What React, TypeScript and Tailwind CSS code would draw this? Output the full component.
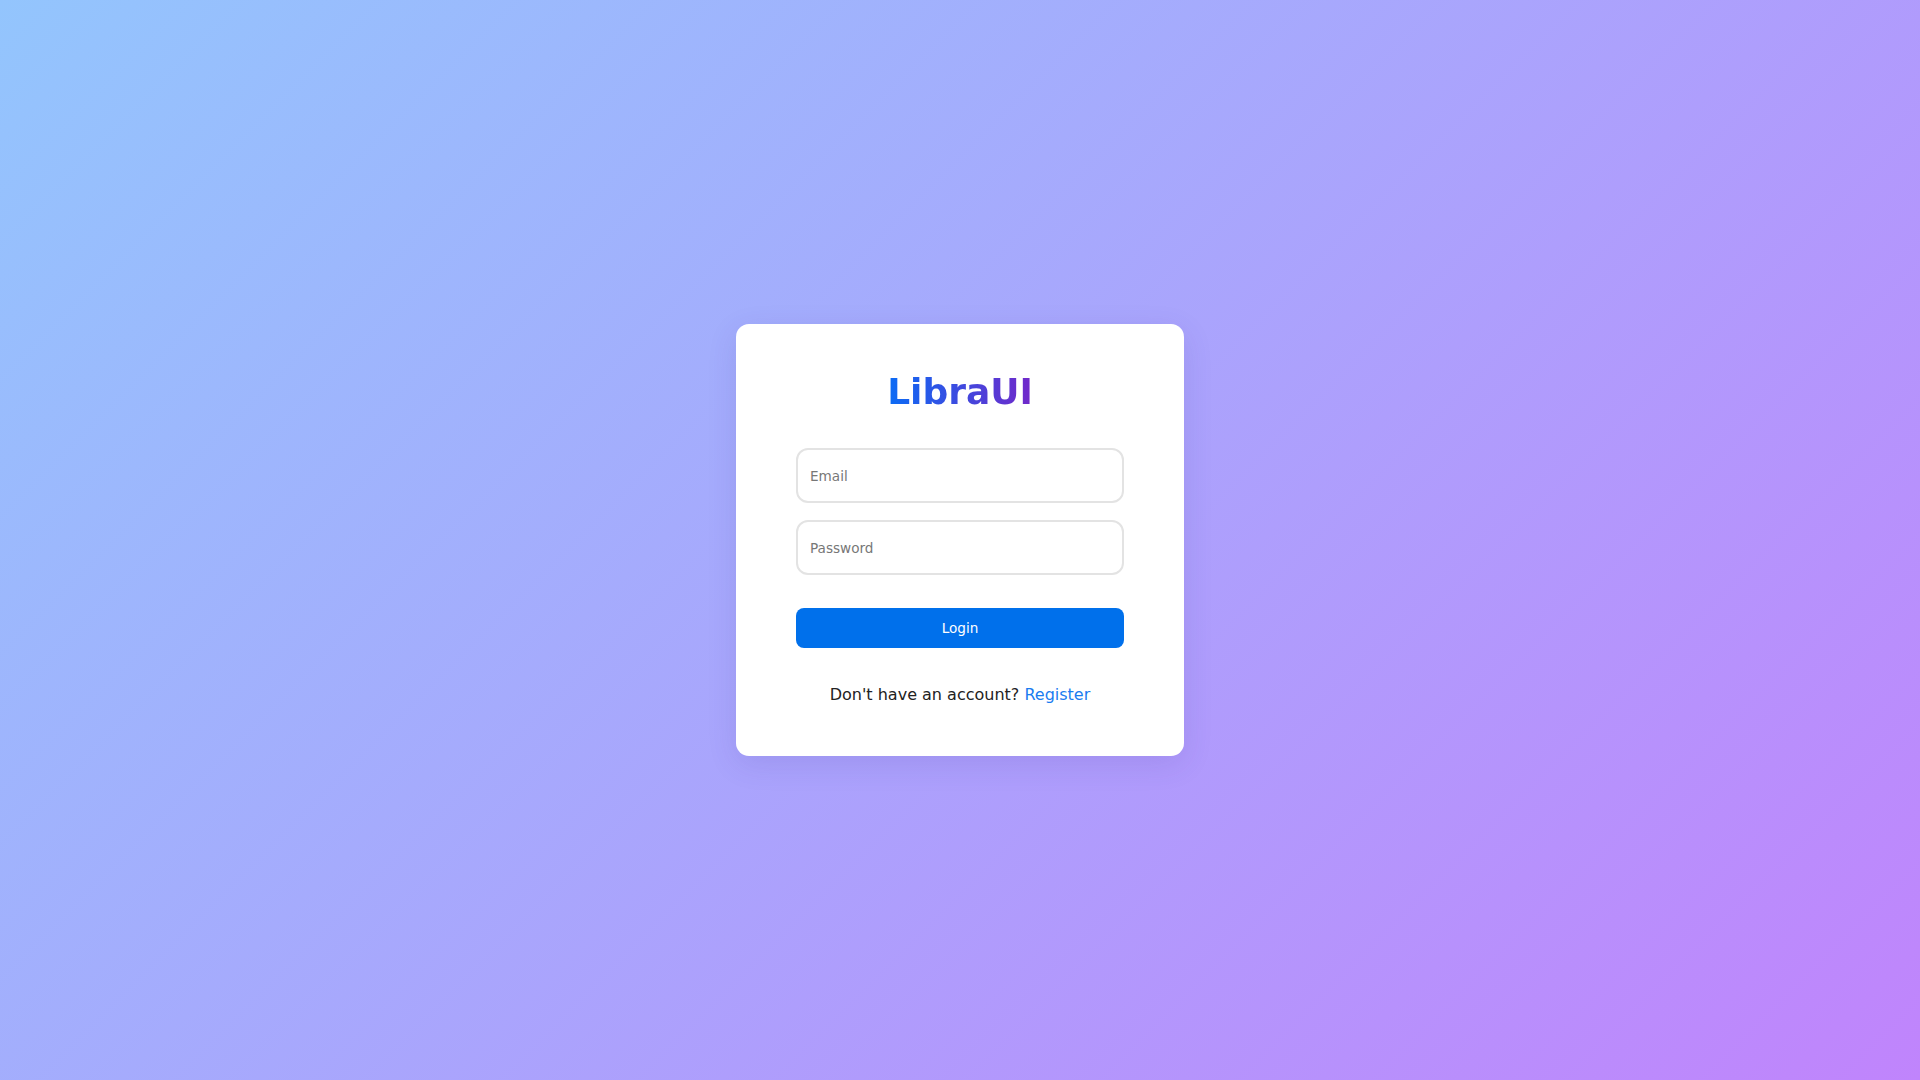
import React from "react";

export default function App() {
  return (
    <div
      className="min-h-screen w-full flex items-center justify-center bg-[linear-gradient(135deg,#93c5fd,#c084fc)]"
      style={{ fontFamily: '"DejaVu Sans", "Liberation Sans", sans-serif' }}
    >
      <LoginCard />
    </div>
  );
}

function LoginCard() {
  const [email, setEmail] = React.useState("");
  const [password, setPassword] = React.useState("");
  return (
    <div className="w-[448px] rounded-[13px] bg-white px-[60px] pt-[47px] pb-[52px] shadow-[0_8px_30px_rgba(60,40,140,0.12)]">
      <div className="text-center">
        <h1 className="inline-block text-[36px] font-bold leading-[42px] bg-clip-text text-transparent bg-[linear-gradient(90deg,#0a6cf5,#7228c9)]">
          LibraUI
        </h1>
      </div>
      <input
        type="email"
        placeholder="Email"
        value={email}
        onChange={(e) => setEmail(e.target.value)}
        className="mt-[35px] block h-[55px] w-full rounded-[12px] border-2 border-[#e3e3e3] px-[12px] text-[13.6px] text-[#222] placeholder:text-[#777] outline-none"
      />
      <input
        type="password"
        placeholder="Password"
        value={password}
        onChange={(e) => setPassword(e.target.value)}
        className="mt-[17px] block h-[55px] w-full rounded-[12px] border-2 border-[#e3e3e3] px-[12px] text-[13.6px] text-[#222] placeholder:text-[#777] outline-none"
      />
      <button className="mt-[33px] block h-[40px] w-full rounded-[8px] bg-[#0070eb] text-[13.6px] text-white">
        Login
      </button>
      <p className="mt-[37px] text-center text-[16px] leading-[19px] text-[#222]">
        Don't have an account? <a href="#" className="text-[#1a7cf0]">Register</a>
      </p>
    </div>
  );
}
